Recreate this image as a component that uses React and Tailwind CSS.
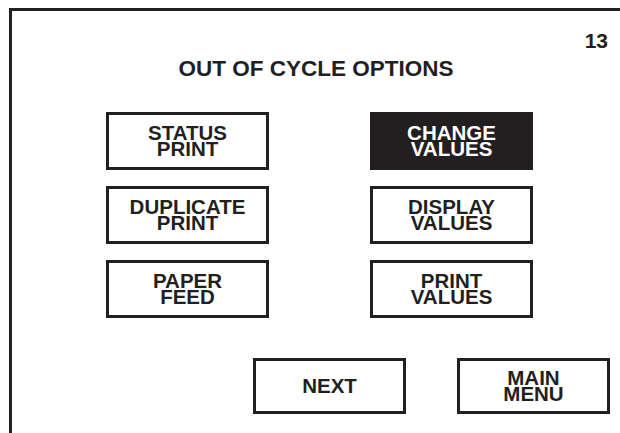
export default function App() {
  const Btn = ({ children, dark, w = "w-[163px]", h = "h-[58px]" }) => (
    <div
      className={`${w} ${h} border-[3px] border-[#231f20] flex flex-col items-center justify-center text-[20.5px] leading-[16px] font-bold text-center ${
        dark ? "bg-[#231f20] text-white" : "bg-white text-[#231f20]"
      }`}
    >
      {children}
    </div>
  );
  return (
    <div className="w-[620px] h-[433px] bg-white pt-[8px] pl-[9px] font-['Liberation_Sans',Arial,sans-serif] text-[#231f20] overflow-hidden">
      <div className="h-full border-t-[3px] border-l-[3px] border-[#231f20] flex flex-col">
        <div className="flex justify-end pr-[12px] pt-[19px] text-[21px] leading-[22px] font-bold">13</div>
        <div className="mt-[6px] text-center text-[22.5px] leading-[22px] font-bold">OUT OF CYCLE OPTIONS</div>
        <div className="mt-[32px] pl-[94px] grid grid-cols-[163px_163px] gap-x-[101px] gap-y-[16px]">
          <Btn><span>STATUS</span><span>PRINT</span></Btn>
          <Btn dark><span>CHANGE</span><span>VALUES</span></Btn>
          <Btn><span>DUPLICATE</span><span>PRINT</span></Btn>
          <Btn><span>DISPLAY</span><span>VALUES</span></Btn>
          <Btn><span>PAPER</span><span>FEED</span></Btn>
          <Btn><span>PRINT</span><span>VALUES</span></Btn>
        </div>
        <div className="mt-[40px] pl-[241px] flex gap-[51px]">
          <Btn w="w-[153px]" h="h-[56px]"><span>NEXT</span></Btn>
          <Btn w="w-[153px]" h="h-[56px]"><span>MAIN</span><span>MENU</span></Btn>
        </div>
      </div>
    </div>
  );
}
